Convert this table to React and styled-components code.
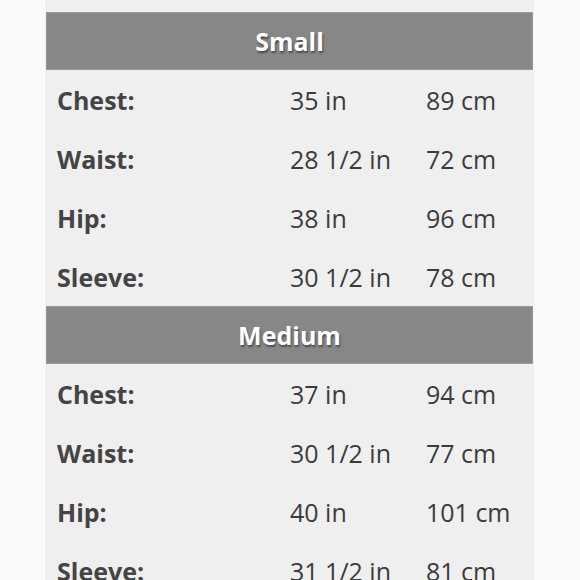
import React from "react";
import styled, { createGlobalStyle } from "styled-components";

const Global = createGlobalStyle`
  html, body { margin: 0; padding: 0; background: #fafafa; }
  body { font-family: "Open Sans", "Noto Sans", sans-serif; }
`;

const Page = styled.div`
  width: 580px;
  height: 580px;
  overflow: hidden;
  display: flex;
  justify-content: center;
  align-items: flex-start;
`;

const Table = styled.div`
  width: 489px;
  margin-left: -1px;
  background: #efefef;
  padding-top: 12px;
  display: flex;
  flex-direction: column;
  flex-shrink: 0;
`;

const Header = styled.div`
  flex-shrink: 0;
  height: 56px;
  margin: 0 1px;
  background: #878787;
  border: 1px solid #9a9a9a;
  display: flex;
  align-items: center;
  justify-content: center;
  color: #fff;
  font-weight: 700;
  font-size: 25px;
  text-shadow: 1px 2px 2px rgba(0, 0, 0, 0.45);
`;

const Row = styled.div`
  flex-shrink: 0;
  height: 59px;
  display: grid;
  grid-template-columns: 233px 136px 1fr;
  align-items: center;
  padding-left: 12px;
  font-size: 25px;
  color: #3b3b3b;
`;

const Label = styled.div`
  font-weight: 700;
  color: #444;
`;

const Value = styled.div`
  font-weight: 400;
`;

const sizes = [
  {
    name: "Small",
    rows: [
      ["Chest:", "35 in", "89 cm"],
      ["Waist:", "28 1/2 in", "72 cm"],
      ["Hip:", "38 in", "96 cm"],
      ["Sleeve:", "30 1/2 in", "78 cm"],
    ],
  },
  {
    name: "Medium",
    rows: [
      ["Chest:", "37 in", "94 cm"],
      ["Waist:", "30 1/2 in", "77 cm"],
      ["Hip:", "40 in", "101 cm"],
      ["Sleeve:", "31 1/2 in", "81 cm"],
    ],
  },
];

export default function App() {
  return (
    <Page>
      <Global />
      <Table>
        {sizes.map((s) => (
          <React.Fragment key={s.name}>
            <Header>{s.name}</Header>
            {s.rows.map(([l, a, b]) => (
              <Row key={l}>
                <Label>{l}</Label>
                <Value>{a}</Value>
                <Value>{b}</Value>
              </Row>
            ))}
          </React.Fragment>
        ))}
      </Table>
    </Page>
  );
}
